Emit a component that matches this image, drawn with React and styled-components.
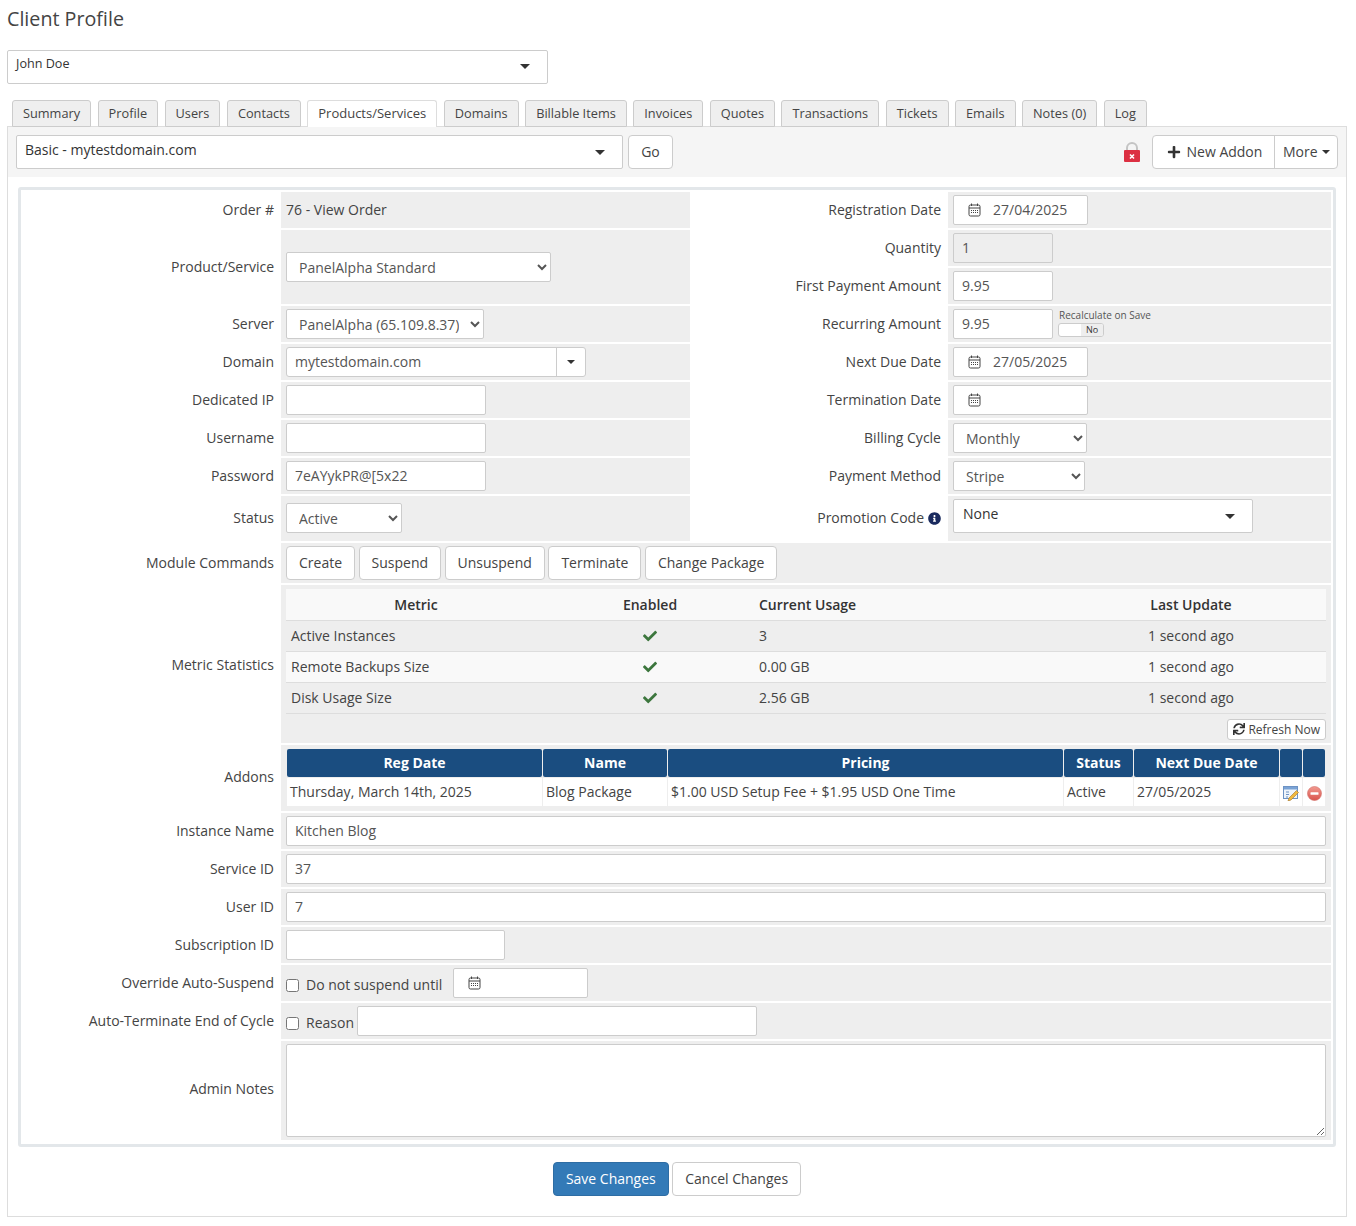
import React from "react"
import styled, { createGlobalStyle } from "styled-components"
import { FaCheck, FaInfoCircle, FaPlus, FaSync } from "react-icons/fa"

const GlobalStyle = createGlobalStyle`
  html, body {
    margin: 0;
    background: #fff;
  }
  body {
    font-family: "Open Sans", "Liberation Sans", sans-serif;
    font-size: 14px;
    color: #333;
  }
  * {
    box-sizing: border-box;
  }
`

const Page = styled.div`
  width: 1356px;
  height: 1226px;
  padding: 0 9px 0 7px;
  overflow: hidden;
`
const Title = styled.h1`
  margin: 0;
  padding-top: 5px;
  height: 50px;
  font-size: 19.7px;
  line-height: 28px;
  font-weight: 400;
  color: #444;
`
const Combo = styled.div`
  display: flex;
  justify-content: space-between;
  width: ${p => p.$w}px;
  height: 34px;
  padding: ${p => p.$pad};
  background: #fff;
  border: 1px solid #ccc;
  border-radius: 2px;
  font-size: ${p => p.$size}px;
  line-height: 18px;
  color: #333;
`
const Caret = styled.span`
  width: 0;
  height: 0;
  margin: ${p => p.$m};
  border-left: 5px solid transparent;
  border-right: 5px solid transparent;
  border-top: 5px solid #333;
`
const TabRow = styled.div`
  display: flex;
  gap: 6.5px;
  height: 27px;
  margin: 16px 0 0 5px;
  position: relative;
  z-index: 1;
`
const Tab = styled.div`
  padding: 0 10px;
  height: 27px;
  line-height: 25px;
  font-size: ${p => (p.$active ? 13 : 12.75)}px;
  color: #444;
  background: ${p => (p.$active ? "#fff" : "#efefef")};
  border: 1px solid ${p => (p.$active ? "#ddd" : "#ccc")};
  border-bottom: ${p => (p.$active ? "none" : "1px solid #ccc")};
  border-radius: 3px 3px 0 0;
`
const Box = styled.div`
  height: 1091px;
  margin-top: -1px;
  border: 1px solid #ddd;
`
const Toolbar = styled.div`
  display: flex;
  align-items: flex-start;
  height: 50px;
  padding: 8px 8px 0;
  background: #f5f5f5;
`
const Button = styled.button`
  height: 34px;
  padding: 0 12px 2px;
  font-family: inherit;
  font-size: 14px;
  color: #444;
  background: #fff;
  border: 1px solid #ccc;
  border-radius: 4px;
`
const GoButton = styled(Button)`
  margin-left: 5px;
  width: 45px;
  padding: 0 0 2px;
`
const LockWrap = styled.span`
  margin: 7px 11px 0 auto;
  display: flex;
`
const Group = styled.div`
  display: flex;
  height: 34px;
  background: #fff;
  border: 1px solid #ccc;
  border-radius: 4px;
  color: #444;
  line-height: 32px;
`
const GroupItem = styled.div`
  display: flex;
  align-items: center;
  gap: ${p => p.$gap || 0}px;
  padding: ${p => p.$pad};
  border-left: ${p => (p.$split ? "1px solid #ccc" : "none")};
`
const Frame = styled.div`
  margin: 10px 10px 0;
  border: 3px solid #e3e7ea;
  border-radius: 3px;
  height: 960px;
`
const FormTable = styled.table`
  width: 1312px;
  table-layout: fixed;
  border-collapse: separate;
  border-spacing: 2px;
`
const Label = styled.td`
  padding: 0 5px ${p => (p.$pb === undefined ? 2 : p.$pb)}px 0;
  text-align: right;
  color: #444;
  height: ${p => p.$h || 36}px;
`
const Field = styled.td`
  padding: ${p => p.$pad || "0 5px"};
  background: #eee;
  color: #444;
  height: ${p => p.$h || 36}px;
`
const Inline = styled.div`
  display: flex;
  align-items: ${p => p.$align || "center"};
  gap: ${p => p.$gap || 0}px;
`
const Input = styled.input`
  display: block;
  flex: none;
  width: ${p => (p.$w ? `${p.$w}px` : "100%")};
  height: 30px;
  margin-left: ${p => p.$ml || 0}px;
  padding: 0 8px 2px;
  font-family: inherit;
  font-size: 14px;
  color: #555;
  background: ${p => (p.disabled ? "#eee" : "#fff")};
  border: 1px solid #ccc;
  border-radius: 2px;
  outline: none;
  opacity: 1;
`
const Select = styled.select`
  display: block;
  width: ${p => p.$w}px;
  height: 30px;
  padding: 0 8px;
  font-family: inherit;
  font-size: 14px;
  color: #555;
  background: #fff;
  border: 1px solid #ccc;
  border-radius: 2px;
`
const Notes = styled.textarea`
  display: block;
  width: 100%;
  height: 93px;
  font-family: inherit;
  font-size: 14px;
  background: #fff;
  border: 1px solid #ccc;
  border-radius: 2px;
`
const DateBox = styled.div`
  display: flex;
  align-items: center;
  gap: 12px;
  width: 135px;
  height: 30px;
  margin-left: ${p => p.$ml || 0}px;
  padding: 0 0 2px 14px;
  background: #fff;
  border: 1px solid #ccc;
  border-radius: 2px;
  color: #555;
`
const CalendarSvg = styled.svg`
  margin-top: 2px;
`
const InputGroup = styled.div`
  display: flex;
  width: 300px;
  height: 30px;
  background: #fff;
  border: 1px solid #ccc;
  border-radius: 3px;
  color: #555;
`
const InputText = styled.div`
  flex: 1;
  padding-left: 8px;
  line-height: 28px;
`
const InputAddon = styled.div`
  display: flex;
  align-items: center;
  justify-content: center;
  width: 29px;
  border-left: 1px solid #ccc;
`
const SmallCaret = styled.span`
  width: 0;
  height: 0;
  border-left: 4px solid transparent;
  border-right: 4px solid transparent;
  border-top: 4px solid #333;
`
const ToggleWrap = styled.div`
  margin-left: 6px;
  font-size: 10px;
  line-height: 12px;
  color: #555;
`
const Toggle = styled.div`
  display: flex;
  width: 46px;
  height: 14px;
  margin: 2px 0 0 -1px;
  border: 1px solid #ccc;
  border-radius: 3px;
  overflow: hidden;
  background: #fff;
`
const ToggleOff = styled.span`
  margin-left: auto;
  width: 22px;
  text-align: center;
  background: #eee;
  line-height: 12px;
  font-size: 9px;
  color: #333;
`
const ButtonRow = styled.div`
  display: flex;
  gap: 3.5px;
`
const MetricTable = styled.table`
  width: 100%;
  table-layout: fixed;
  border-collapse: collapse;
`
const MetricHead = styled.th`
  height: 31px;
  padding: 0 5px;
  font-weight: 600;
  color: #333;
  text-align: ${p => p.$align || "center"};
  background: #f9f9f9;
  border-bottom: 1px solid #ddd;
`
const MetricCell = styled.td`
  height: 31px;
  padding: 0 5px;
  color: #444;
  text-align: ${p => p.$align || "left"};
  background: ${p => (p.$alt ? "#f9f9f9" : "transparent")};
  border-bottom: 1px solid #ddd;
`
const EnabledMark = styled(FaCheck)`
  display: block;
  margin: 0 auto;
  color: #3c763d;
`
const RefreshRow = styled.div`
  display: flex;
  justify-content: flex-end;
  margin-top: 5px;
`
const RefreshButton = styled.button`
  display: flex;
  align-items: center;
  gap: 3px;
  height: 21px;
  padding: 0 5px;
  font-family: inherit;
  font-size: 12px;
  color: #444;
  background: #fff;
  border: 1px solid #ccc;
  border-radius: 3px;
`
const AddonTable = styled.table`
  width: 1040px;
  table-layout: fixed;
  border-collapse: separate;
  border-spacing: 1px;
`
const AddonHead = styled.th`
  height: 28px;
  padding: 0;
  font-weight: 700;
  color: #fff;
  background: #1a4d80;
  border-radius: 2px;
`
const AddonCell = styled.td`
  height: 28px;
  padding: 0 3px;
  background: #fff;
  color: #444;
  white-space: nowrap;
`
const IconCell = styled(AddonCell)`
  padding: 7px 0 0;
  text-align: center;
`
const Check = styled.input`
  width: 13px;
  height: 13px;
  margin: 4px 7px 0 0;
  flex: none;
`
const CheckText = styled.span`
  padding-top: 2px;
  color: #444;
`
const Actions = styled.div`
  display: flex;
  justify-content: center;
  gap: 3.5px;
  margin-top: 15px;
`
const SaveButton = styled(Button)`
  color: #fff;
  background: #337ab7;
  border-color: #2e6da4;
`
const InfoIcon = styled(FaInfoCircle)`
  margin-left: 4px;
  vertical-align: -2px;
  color: #1a2a5e;
`

const CalendarIcon = () => (
  <CalendarSvg width="13" height="14" viewBox="0 0 13 14" fill="none" stroke="#444" strokeWidth="1">
    <rect x="1" y="2" width="11" height="11" rx="1.5" />
    <path d="M1 5h11M3.5 0.5v2.5M9.5 0.5v2.5" />
    <path d="M3 7.5h7M3 9.5h7" strokeDasharray="1 1" />
  </CalendarSvg>
)

const LockIcon = () => (
  <svg width="18" height="20" viewBox="0 0 18 20">
    <path d="M4 9V6a5 5 0 0 1 10 0v3" fill="none" stroke="#c4c4c4" strokeWidth="2" />
    <rect x="1" y="8" width="16" height="12" rx="1" fill="#dc3042" />
    <path d="M7 12.5l4 4M11 12.5l-4 4" stroke="#fff" strokeWidth="1.6" />
  </svg>
)

const EditIcon = () => (
  <svg width="16" height="16" viewBox="0 0 16 16">
    <rect x="0.5" y="1.5" width="14" height="12" fill="#eef4fb" stroke="#6d93c4" />
    <rect x="1" y="2" width="13" height="2.5" fill="#7aa3d6" />
    <path d="M3 7h3M3 9.5h3M3 12h2" stroke="#6d93c4" />
    <path d="M13.5 5.5l2 2L8 15l-3 1 1-3z" fill="#f0b93f" stroke="#a5762a" strokeWidth="0.6" />
  </svg>
)

const RemoveIcon = () => (
  <svg width="15" height="15" viewBox="0 0 15 15">
    <defs>
      <linearGradient id="rm" x1="0" y1="0" x2="0" y2="1">
        <stop offset="0" stopColor="#f29a90" />
        <stop offset="1" stopColor="#d9534c" />
      </linearGradient>
    </defs>
    <circle cx="7.5" cy="7.5" r="7" fill="url(#rm)" stroke="#d0706a" strokeWidth="0.6" />
    <rect x="3.5" y="6.2" width="8" height="2.6" rx="0.5" fill="#fff" />
  </svg>
)

const tabs = [
  "Summary",
  "Profile",
  "Users",
  "Contacts",
  "Products/Services",
  "Domains",
  "Billable Items",
  "Invoices",
  "Quotes",
  "Transactions",
  "Tickets",
  "Emails",
  "Notes (0)",
  "Log",
]

const metrics = [
  ["Active Instances", "3"],
  ["Remote Backups Size", "0.00 GB"],
  ["Disk Usage Size", "2.56 GB"],
]

const addonColumns = [
  ["Reg Date", 255],
  ["Name", 124],
  ["Pricing", 395],
  ["Status", 69],
  ["Next Due Date", 145],
  ["", 22],
  ["", 22],
]

const commands = ["Create", "Suspend", "Unsuspend", "Terminate", "Change Package"]

const One = ({ value, w }) => (
  <Select $w={w} defaultValue={value}>
    <option>{value}</option>
  </Select>
)

const App = () => {
  return (
    <Page>
      <GlobalStyle />
      <Title>Client Profile</Title>
      <Combo $w={541} $size={12.6} $pad="4px 17px 0 8px">
        John Doe
        <Caret $m="9px 0 0 0" />
      </Combo>
      <TabRow>
        {tabs.map(t => (
          <Tab key={t} $active={t === "Products/Services"}>
            {t}
          </Tab>
        ))}
      </TabRow>
      <Box>
        <Toolbar>
          <Combo $w={607} $size={14} $pad="5px 17px 0 8px">
            Basic - mytestdomain.com
            <Caret $m="9px 0 0 0" />
          </Combo>
          <GoButton>Go</GoButton>
          <LockWrap>
            <LockIcon />
          </LockWrap>
          <Group>
            <GroupItem $pad="0 12px 0 14px" $gap={6}>
              <FaPlus size={14} color="#333" />
              New Addon
            </GroupItem>
            <GroupItem $pad="0 7.5px" $gap={4} $split>
              More
              <SmallCaret />
            </GroupItem>
          </Group>
        </Toolbar>
        <Frame>
          <FormTable>
            <colgroup>
              <col width="256" />
              <col width="409" />
              <col width="254" />
              <col width="383" />
            </colgroup>
            <tbody>
              <tr>
                <Label>Order #</Label>
                <Field $pad="0 5px 2px">76 - View Order</Field>
                <Label>Registration Date</Label>
                <Field>
                  <DateBox>
                    <CalendarIcon />
                    27/04/2025
                  </DateBox>
                </Field>
              </tr>
              <tr>
                <Label rowSpan={2}>Product/Service</Label>
                <Field rowSpan={2}>
                  <One value="PanelAlpha Standard" w={265} />
                </Field>
                <Label>Quantity</Label>
                <Field>
                  <Input $w={100} disabled defaultValue="1" />
                </Field>
              </tr>
              <tr>
                <Label>First Payment Amount</Label>
                <Field>
                  <Input $w={100} defaultValue="9.95" />
                </Field>
              </tr>
              <tr>
                <Label>Server</Label>
                <Field>
                  <One value="PanelAlpha (65.109.8.37)" w={198} />
                </Field>
                <Label>Recurring Amount</Label>
                <Field>
                  <Inline $align="flex-start">
                    <Input $w={100} defaultValue="9.95" />
                    <ToggleWrap>
                      Recalculate on Save
                      <Toggle>
                        <ToggleOff>No</ToggleOff>
                      </Toggle>
                    </ToggleWrap>
                  </Inline>
                </Field>
              </tr>
              <tr>
                <Label>Domain</Label>
                <Field>
                  <InputGroup>
                    <InputText>mytestdomain.com</InputText>
                    <InputAddon>
                      <SmallCaret />
                    </InputAddon>
                  </InputGroup>
                </Field>
                <Label>Next Due Date</Label>
                <Field>
                  <DateBox>
                    <CalendarIcon />
                    27/05/2025
                  </DateBox>
                </Field>
              </tr>
              <tr>
                <Label>Dedicated IP</Label>
                <Field>
                  <Input $w={200} />
                </Field>
                <Label>Termination Date</Label>
                <Field>
                  <DateBox>
                    <CalendarIcon />
                  </DateBox>
                </Field>
              </tr>
              <tr>
                <Label>Username</Label>
                <Field>
                  <Input $w={200} />
                </Field>
                <Label>Billing Cycle</Label>
                <Field>
                  <One value="Monthly" w={134} />
                </Field>
              </tr>
              <tr>
                <Label>Password</Label>
                <Field>
                  <Input $w={200} defaultValue="7eAYykPR@[5x22" />
                </Field>
                <Label>Payment Method</Label>
                <Field>
                  <One value="Stripe" w={132} />
                </Field>
              </tr>
              <tr>
                <Label $h={45}>Status</Label>
                <Field $h={45} $pad="0 5px 1px">
                  <One value="Active" w={116} />
                </Field>
                <Label $h={45}>
                  Promotion Code
                  <InfoIcon size={13} />
                </Label>
                <Field $h={45} $pad="0 5px 5px">
                  <Combo $w={300} $size={14} $pad="5px 17px 0 9px">
                    None
                    <Caret $m="9px 0 0 0" />
                  </Combo>
                </Field>
              </tr>
              <tr>
                <Label $h={40}>Module Commands</Label>
                <Field $h={40} colSpan={3}>
                  <ButtonRow>
                    {commands.map(c => (
                      <Button key={c}>{c}</Button>
                    ))}
                  </ButtonRow>
                </Field>
              </tr>
              <tr>
                <Label $h={158} $pb={0}>
                  Metric Statistics
                </Label>
                <Field $h={158} colSpan={3} $pad="4px 5px 3px">
                  <MetricTable>
                    <colgroup>
                      <col width="260" />
                      <col width="208" />
                      <col width="302" />
                      <col width="270" />
                    </colgroup>
                    <thead>
                      <tr>
                        <MetricHead>Metric</MetricHead>
                        <MetricHead>Enabled</MetricHead>
                        <MetricHead $align="left">Current Usage</MetricHead>
                        <MetricHead>Last Update</MetricHead>
                      </tr>
                    </thead>
                    <tbody>
                      {metrics.map(([name, usage], i) => (
                        <tr key={name}>
                          <MetricCell $alt={i === 1}>{name}</MetricCell>
                          <MetricCell $alt={i === 1} $align="center">
                            <EnabledMark size={14} />
                          </MetricCell>
                          <MetricCell $alt={i === 1}>{usage}</MetricCell>
                          <MetricCell $alt={i === 1} $align="center">
                            1 second ago
                          </MetricCell>
                        </tr>
                      ))}
                    </tbody>
                  </MetricTable>
                  <RefreshRow>
                    <RefreshButton>
                      <FaSync size={12} color="#333" />
                      Refresh Now
                    </RefreshButton>
                  </RefreshRow>
                </Field>
              </tr>
              <tr>
                <Label $h={66} $pb={4}>
                  Addons
                </Label>
                <Field $h={66} colSpan={3} $pad="0 5px 2px">
                  <AddonTable>
                    <colgroup>
                      {addonColumns.map(([name, w], i) => (
                        <col key={i} width={w} />
                      ))}
                    </colgroup>
                    <thead>
                      <tr>
                        {addonColumns.map(([name], i) => (
                          <AddonHead key={i}>{name}</AddonHead>
                        ))}
                      </tr>
                    </thead>
                    <tbody>
                      <tr>
                        <AddonCell>Thursday, March 14th, 2025</AddonCell>
                        <AddonCell>Blog Package</AddonCell>
                        <AddonCell>$1.00 USD Setup Fee + $1.95 USD One Time</AddonCell>
                        <AddonCell>Active</AddonCell>
                        <AddonCell>27/05/2025</AddonCell>
                        <IconCell>
                          <EditIcon />
                        </IconCell>
                        <IconCell>
                          <RemoveIcon />
                        </IconCell>
                      </tr>
                    </tbody>
                  </AddonTable>
                </Field>
              </tr>
              <tr>
                <Label>Instance Name</Label>
                <Field colSpan={3}>
                  <Input defaultValue="Kitchen Blog" />
                </Field>
              </tr>
              <tr>
                <Label>Service ID</Label>
                <Field colSpan={3}>
                  <Input defaultValue="37" />
                </Field>
              </tr>
              <tr>
                <Label>User ID</Label>
                <Field colSpan={3}>
                  <Input defaultValue="7" />
                </Field>
              </tr>
              <tr>
                <Label>Subscription ID</Label>
                <Field colSpan={3}>
                  <Input $w={219} />
                </Field>
              </tr>
              <tr>
                <Label>Override Auto-Suspend</Label>
                <Field colSpan={3}>
                  <Inline>
                    <Check type="checkbox" />
                    <CheckText>Do not suspend until</CheckText>
                    <DateBox $ml={11}>
                      <CalendarIcon />
                    </DateBox>
                  </Inline>
                </Field>
              </tr>
              <tr>
                <Label>Auto-Terminate End of Cycle</Label>
                <Field colSpan={3}>
                  <Inline>
                    <Check type="checkbox" />
                    <CheckText>Reason</CheckText>
                    <Input $w={400} $ml={3} />
                  </Inline>
                </Field>
              </tr>
              <tr>
                <Label $h={99} $pb={4}>
                  Admin Notes
                </Label>
                <Field $h={99} colSpan={3}>
                  <Notes />
                </Field>
              </tr>
            </tbody>
          </FormTable>
        </Frame>
        <Actions>
          <SaveButton>Save Changes</SaveButton>
          <Button>Cancel Changes</Button>
        </Actions>
      </Box>
    </Page>
  )
}

export default App
